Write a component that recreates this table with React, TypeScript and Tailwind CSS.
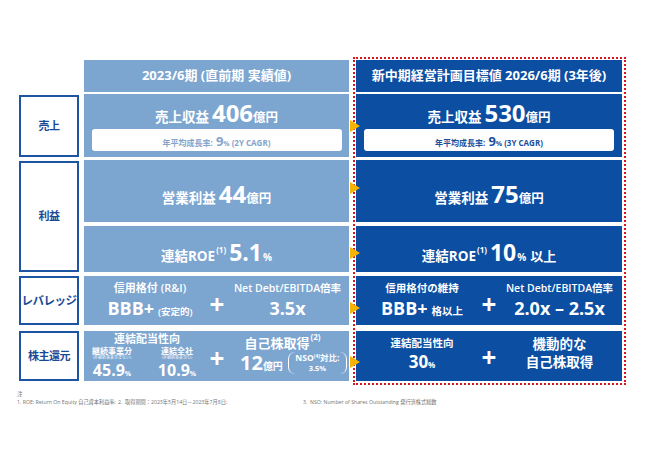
import type { ReactNode } from 'react'

// Mid-term plan comparison: actual (FY2023/6) vs target (FY2026/6)

const LIGHT = 'bg-[#7ca5d0]'
const DARK = 'bg-[#0b4ea2]'

function Arrow({ top }: { top: string }) {
  return (
    <span
      className={`absolute z-10 left-[-6px] ${top} w-0 h-0 border-y-[6px] border-y-transparent border-l-[10px] border-l-[#f6b400]`}
    />
  )
}

function Label({ h, mt, children }: { h: string; mt: string; children: ReactNode }) {
  return (
    <div
      className={`${h} ${mt} border-2 border-[#1d55a3] bg-white flex items-center justify-center text-[11px] font-bold text-[#1a4a96] tracking-[-0.5px]`}
    >
      {children}
    </div>
  )
}

function Plus() {
  return <div className="w-[18px] flex justify-center text-[26px] font-bold leading-none text-white">+</div>
}

function Sup({ children }: { children: ReactNode }) {
  return <span className="text-[8px] font-bold relative -top-[8px] ml-[1px]">{children}</span>
}

function Pill({ dark, period }: { dark?: boolean; period: string }) {
  return (
    <div
      className={`w-[250px] h-[22px] bg-white rounded-[3px] flex items-baseline justify-center pt-[3px] font-bold ${
        dark ? 'text-[#1e4f9c]' : 'text-[#86a3c9]'
      }`}
    >
      <span className="text-[8px]">年平均成長率:</span>
      <span className="text-[13px] ml-[3px]">9</span>
      <span className="text-[7px]">%</span>
      <span className="text-[8px] ml-[2px]">({period} CAGR)</span>
    </div>
  )
}

function Headline({ label, value }: { label: string; value: string }) {
  return (
    <div className="flex items-baseline text-white font-bold leading-none">
      <span className="text-[13.5px]">{label}</span>
      <span className="text-[24px] ml-[3px]">{value}</span>
      <span className="text-[12.5px]">億円</span>
    </div>
  )
}

function Payout({ title, note, value }: { title: string; note: string; value: string }) {
  return (
    <div className="w-[50px] flex flex-col items-center">
      <span className="text-[8px] font-semibold leading-[9px] mt-[1px]">{title}</span>
      <span className="text-[4px] leading-[5px] opacity-90 whitespace-nowrap">{note}</span>
      <span className="mt-[2px] h-[16px] flex items-baseline leading-none">
        <span className="text-[16px] font-bold">{value}</span>
        <span className="text-[7px] font-bold">%</span>
      </span>
    </div>
  )
}

export default function App() {
  return (
    <div className="w-[645px] h-[455px] bg-white font-['Open_Sans','Noto_Sans_CJK_JP',sans-serif] overflow-hidden">
      <div className="flex pt-[57px] pl-[19px]">
        {/* row labels */}
        <div className="w-[60px] mt-[3px] flex flex-col">
          <div className="h-[35px]" />
          <Label h="h-[62px]" mt="mt-0">売上</Label>
          <Label h="h-[111px]" mt="mt-[4px]">利益</Label>
          <Label h="h-[49px]" mt="mt-[4px]">
            <span className="text-[11.5px]">レバレッジ</span>
          </Label>
          <Label h="h-[50px]" mt="mt-[6px]">株主還元</Label>
        </div>

        {/* FY2023/6 actual */}
        <div className="w-[265px] ml-[5px] mt-[3px] flex flex-col text-white">
          <div className={`h-[32px] ${LIGHT} flex items-center justify-center text-[13px] font-bold`}>
            2023/6期 (直前期 実績値)
          </div>
          <div className={`h-[63px] mt-[2px] ${LIGHT} flex flex-col items-center pt-[7px]`}>
            <div className="h-[28px]">
              <Headline label="売上収益" value="406" />
            </div>
            <Pill period="2Y" />
          </div>
          <div className={`h-[62px] mt-[3px] ${LIGHT} flex items-center justify-center pt-[6px]`}>
            <Headline label="営業利益" value="44" />
          </div>
          <div className={`h-[46px] mt-[4px] ${LIGHT} flex items-center justify-center pt-[6px]`}>
            <div className="flex items-baseline font-bold leading-none">
              <span className="text-[13.5px]">連結ROE</span>
              <Sup>(1)</Sup>
              <span className="text-[23px] ml-[3px]">5.1</span>
              <span className="text-[10px] ml-[1px]">%</span>
            </div>
          </div>
          <div className={`h-[49px] mt-[4px] ${LIGHT} flex pt-[5px]`}>
            <div className="w-[124px] flex flex-col items-center pl-[8px]">
              <div className="text-[11px] font-semibold leading-[14px]">信用格付 (R&amp;I)</div>
              <div className="flex items-baseline mt-[4px] leading-none">
                <span className="text-[18px] font-bold">BBB+</span>
                <span className="text-[9.5px] font-semibold ml-[4px]">(安定的)</span>
              </div>
            </div>
            <div className="flex items-center pt-[2px]">
              <Plus />
            </div>
            <div className="w-[123px] flex flex-col items-center">
              <div className="text-[10.5px] font-semibold leading-[14px] whitespace-nowrap">Net Debt/EBITDA倍率</div>
              <div className="text-[18px] font-bold leading-none mt-[4px]">3.5x</div>
            </div>
          </div>
          <div className={`h-[50px] mt-[6px] ${LIGHT} flex`}>
            <div className="w-[124px] flex flex-col pt-[2px]">
              <div className="text-[11px] font-bold leading-[12px] text-center pl-[2px]">連結配当性向</div>
              <div className="flex pl-[3px]">
                <Payout title="継続事業分" note="(非継続事業含まない)" value="45.9" />
                <div className="ml-[15px]">
                  <Payout title="連結全社" note="(非継続事業含む)" value="10.9" />
                </div>
              </div>
            </div>
            <div className="flex items-center pt-[4px]">
              <Plus />
            </div>
            <div className="w-[123px] flex flex-col">
              <div className="flex items-baseline justify-center leading-none pt-[6px] pr-[10px]">
                <span className="text-[13px] font-bold">自己株取得</span>
                <Sup>(2)</Sup>
              </div>
              <div className="flex items-center mt-[2px] pl-[14px]">
                <div className="flex items-baseline leading-none">
                  <span className="text-[20px] font-bold">12</span>
                  <span className="text-[10px] font-bold">億円</span>
                </div>
                <div className="ml-[5px] w-[59px] h-[22px] border-x-[1.5px] border-white rounded-[7px] flex flex-col items-center justify-center leading-none font-bold">
                  <span className="text-[8.5px] flex items-baseline">
                    NSO<span className="text-[5px] relative -top-[3px]">(4)</span>対比:
                  </span>
                  <span className="text-[7.5px] mt-[2px]">3.5%</span>
                </div>
              </div>
            </div>
          </div>
        </div>

        {/* FY2026/6 target, highlighted */}
        <div className="ml-[4px] w-[273px] border-2 border-dotted border-[#d8161f] pt-[1px] pl-[1px] pr-[2px] pb-[2px]">
          <div className="w-[266px] flex flex-col text-white">
            <div className={`h-[32px] ${DARK} flex items-center justify-center text-[13px] font-bold whitespace-nowrap`}>
              新中期経営計画目標値 2026/6期 (3年後)
            </div>
            <div className={`relative h-[63px] mt-[2px] ${DARK} flex flex-col items-center pt-[7px]`}>
              <Arrow top="top-[26px]" />
              <div className="h-[28px]">
                <Headline label="売上収益" value="530" />
              </div>
              <Pill dark period="3Y" />
            </div>
            <div className={`relative h-[62px] mt-[3px] ${DARK} flex items-center justify-center pt-[6px]`}>
              <Arrow top="top-[22px]" />
              <Headline label="営業利益" value="75" />
            </div>
            <div className={`relative h-[46px] mt-[4px] ${DARK} flex items-center justify-center pt-[6px]`}>
              <Arrow top="top-[21px]" />
              <div className="flex items-baseline font-bold leading-none">
                <span className="text-[13.5px]">連結ROE</span>
                <Sup>(1)</Sup>
                <span className="text-[23px] ml-[3px]">10</span>
                <span className="text-[10px] ml-[1px]">%</span>
                <span className="text-[13px] ml-[4px]">以上</span>
              </div>
            </div>
            <div className={`relative h-[49px] mt-[4px] ${DARK} flex pt-[5px]`}>
              <Arrow top="top-[26px]" />
              <div className="w-[124px] flex flex-col items-center pl-[8px]">
                <div className="text-[10.5px] font-semibold leading-[14px]">信用格付の維持</div>
                <div className="flex items-baseline mt-[4px] leading-none">
                  <span className="text-[18px] font-bold">BBB+</span>
                  <span className="text-[10.5px] font-semibold ml-[4px]">格以上</span>
                </div>
              </div>
              <div className="flex items-center pt-[2px]">
                <Plus />
              </div>
              <div className="w-[123px] flex flex-col items-center">
                <div className="text-[10.5px] font-semibold leading-[14px] whitespace-nowrap">Net Debt/EBITDA倍率</div>
                <div className="text-[18px] font-bold leading-none mt-[4px] whitespace-nowrap">2.0x – 2.5x</div>
              </div>
            </div>
            <div className={`relative h-[50px] mt-[6px] ${DARK} flex`}>
              <Arrow top="top-[25px]" />
              <div className="w-[124px] flex flex-col items-center pl-[8px] pt-[5px]">
                <div className="text-[10.5px] font-semibold leading-[14px]">連結配当性向</div>
                <div className="flex items-baseline mt-[3px] leading-none">
                  <span className="text-[17px] font-bold">30</span>
                  <span className="text-[8px] font-bold">%</span>
                </div>
              </div>
              <div className="flex items-center pt-[2px]">
                <Plus />
              </div>
              <div className="w-[123px] flex flex-col items-center pt-[4px] leading-[18px] text-[13.5px] font-semibold">
                <div>機動的な</div>
                <div>自己株取得</div>
              </div>
            </div>
          </div>
        </div>
      </div>

      {/* footnotes */}
      <div className="pl-[17px] mt-[5px] text-[#747474] leading-[8px]">
        <div className="text-[5.5px]">注</div>
        <div className="text-[5.2px] whitespace-nowrap flex">
          <span className="w-[101px]">1. ROE: Return On Equity 自己資本利益率;</span>
          <span className="w-[185px]">2.&nbsp;&nbsp;取得期間：2023年5月14日－2023年7月8日;</span>
          <span>3.&nbsp;&nbsp;NSO: Number of Shares Outstanding 発行済株式総数</span>
        </div>
      </div>
    </div>
  )
}
